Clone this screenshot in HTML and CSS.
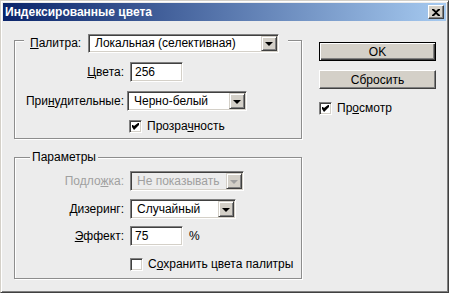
FILE: index.html
```html
<!DOCTYPE html>
<html lang="ru">
<head>
    <meta charset="utf-8">
    <link rel="stylesheet" href="styles.css">
</head>
<body>

<div class="window">
    <div class="titlebar">
        <span class="title">Индексированные цвета</span>
        <span class="close-btn">
            <svg width="8" height="7" viewBox="0 0 8 7"><path d="M0 0h2l2 2 2-2h2v1L5 3.5 8 6v1H6L4 5 2 7H0V6l3-2.5L0 1z" fill="#000"/></svg>
        </span>
    </div>

    <div class="client">
        <div class="left">
            <!-- Palette group -->
            <div class="group group-palette">
                <div class="legend">
                    <span class="legend-label"><u>П</u>алитра:</span>
                    <div class="select select-palette">
                        <span class="value">Локальная (селективная)</span>
                        <span class="arrow"><i></i></span>
                    </div>
                </div>
                <div class="row row-colors">
                    <span class="label"><u>Ц</u>вета:</span>
                    <div class="field input-colors">256</div>
                </div>
                <div class="row row-forced">
                    <span class="label">При<u>н</u>удительные:</span>
                    <div class="select select-forced">
                        <span class="value">Черно-белый</span>
                        <span class="arrow"><i></i></span>
                    </div>
                </div>
                <div class="row row-transp">
                    <span class="box checked"><svg width="7" height="7" viewBox="0 0 7 7"><path d="M0 2h1l1 1 4-3h1v2L2 7 0 4z" fill="#000"/></svg></span>
                    <span>Прозра<u>ч</u>ность</span>
                </div>
            </div>

            <!-- Options group -->
            <div class="group group-options">
                <div class="legend legend-text">Параметры</div>
                <div class="row row-matte disabled">
                    <span class="label">Подло<u>ж</u>ка:</span>
                    <div class="select select-matte">
                        <span class="value">Не показывать</span>
                        <span class="arrow"><i></i></span>
                    </div>
                </div>
                <div class="row row-dither">
                    <span class="label"><u>Д</u>изеринг:</span>
                    <div class="select select-dither">
                        <span class="value">Случайный</span>
                        <span class="arrow"><i></i></span>
                    </div>
                </div>
                <div class="row row-amount">
                    <span class="label"><u>Э</u>ффект:</span>
                    <div class="field input-amount">75</div>
                    <span class="unit">%</span>
                </div>
                <div class="row row-keep">
                    <span class="box"></span>
                    <span>С<u>о</u>хранить цвета палитры</span>
                </div>
            </div>
        </div>

        <div class="right">
            <div class="btn btn-default"><span>OK</span></div>
            <div class="btn"><span>Сбросить</span></div>
            <div class="row row-preview">
                <span class="box checked"><svg width="7" height="7" viewBox="0 0 7 7"><path d="M0 2h1l1 1 4-3h1v2L2 7 0 4z" fill="#000"/></svg></span>
                <span>Пр<u>о</u>смотр</span>
            </div>
        </div>
    </div>
</div>

</body>
</html>
```

FILE: styles.css
```css
body {
    margin: 0;
    font-family: 'Liberation Sans', Arial, sans-serif;
    font-size: 12px;
    color: #000;
    background: #ececec;
}

u {
    text-decoration: underline;
    text-underline-offset: 1px;
}

/* Window frame */
.window {
    width: 449px;
    height: 293px;
    box-sizing: border-box;
    background: #ececec;
    border: 1px solid;
    border-color: #d4d0c8 #404040 #404040 #d4d0c8;
    box-shadow: inset 1px 1px 0 #fff, inset -1px -1px 0 #808080;
    padding: 2px;
}

.titlebar {
    height: 18px;
    display: flex;
    align-items: center;
    justify-content: space-between;
    background: linear-gradient(to right, #0a246a, #a6caf0);
    padding: 0 2px 0 2px;
}

.title {
    color: #fff;
    font-weight: bold;
    font-size: 12px;
}

.close-btn {
    width: 16px;
    height: 14px;
    box-sizing: border-box;
    display: flex;
    align-items: center;
    justify-content: center;
    background: #d4d0c8;
    border: 1px solid;
    border-color: #fff #404040 #404040 #fff;
    box-shadow: inset -1px -1px 0 #808080;
}

/* Client area */
.client {
    display: flex;
    padding: 19px 0 0 11px;
}

.left {
    width: 288px;
}

.right {
    margin-left: 17px;
    padding-top: 2px;
    width: 117px;
}

/* Group boxes */
.group {
    box-sizing: border-box;
    border: 1px solid #8d8d8d;
    box-shadow: inset 1px 1px 0 #fff, 1px 1px 0 #fff;
}

.group-palette {
    height: 99px;
}

.group-options {
    height: 122px;
    margin-top: 18px;
}

.legend {
    display: flex;
    align-items: center;
    background: #ececec;
    width: max-content;
    height: 18px;
    margin: -7px 0 0 9px;
    padding: 0 9px 0 6px;
}

.legend-label {
    width: 58px;
}

.legend-text {
    height: 14px;
    margin: -8px 0 0 15px;
    padding: 0 2px;
}

.row {
    display: flex;
    align-items: center;
}

.label {
    width: 109px;
    text-align: right;
    white-space: nowrap;
}

.row-colors { margin-top: 10px; }
.row-colors .field { margin-left: 6px; }
.row-forced { margin-top: 9px; }
.row-forced .select { margin-left: 3px; }
.row-transp { margin: 8px 0 0 114px; }

.row-matte { margin-top: 7px; }
.row-dither { margin-top: 8px; }
.row-amount { margin-top: 7px; }
.row-keep { margin: 11px 0 0 115px; }
.row-matte .select,
.row-dither .select,
.row-amount .field { margin-left: 6px; }

.unit {
    margin-left: 6px;
}

/* Sunken edit fields */
.field {
    box-sizing: border-box;
    height: 20px;
    background: #fff;
    border: 1px solid;
    border-color: #808080 #fff #fff #808080;
    box-shadow: inset 1px 1px 0 #404040, inset -1px -1px 0 #d4d0c8;
    padding: 2px 0 0 4px;
    line-height: 14px;
}

.input-colors,
.input-amount {
    width: 53px;
}

/* Combo boxes */
.select {
    box-sizing: border-box;
    height: 20px;
    display: flex;
    align-items: center;
    justify-content: space-between;
    background: #fff;
    border: 1px solid;
    border-color: #808080 #fff #fff #808080;
    box-shadow: inset 1px 1px 0 #404040, inset -1px -1px 0 #d4d0c8;
    padding: 1px 1px 1px 6px;
}

.select-palette { width: 191px; height: 19px; }
.select-forced { width: 120px; }
.select-matte { width: 114px; }
.select-dither { width: 106px; }

.arrow {
    width: 16px;
    height: 100%;
    box-sizing: border-box;
    display: flex;
    align-items: center;
    justify-content: center;
    background: #d4d0c8;
    border: 1px solid;
    border-color: #d4d0c8 #404040 #404040 #d4d0c8;
    box-shadow: inset 1px 1px 0 #fff, inset -1px -1px 0 #808080;
}

.arrow i {
    width: 0;
    height: 0;
    border-left: 4px solid transparent;
    border-right: 4px solid transparent;
    border-top: 4px solid #000;
    margin-top: 1px;
}

.disabled {
    color: #a0a0a0;
}

.disabled .select {
    background: #ececec;
}

.disabled .arrow i {
    border-top-color: #a0a0a0;
}

/* Checkboxes */
.box {
    width: 13px;
    height: 13px;
    box-sizing: border-box;
    display: flex;
    align-items: center;
    justify-content: center;
    background: #fff;
    border: 1px solid;
    border-color: #808080 #fff #fff #808080;
    box-shadow: inset 1px 1px 0 #404040, inset -1px -1px 0 #d4d0c8;
    margin-right: 5px;
}

/* Buttons */
.btn {
    box-sizing: border-box;
    height: 19px;
    display: flex;
    align-items: center;
    justify-content: center;
    background: #d4d0c8;
    border: 1px solid;
    border-color: #fff #404040 #404040 #fff;
    box-shadow: inset -1px -1px 0 #808080;
    margin-bottom: 9px;
}

.btn-default {
    border: 1px solid #000;
    box-shadow: inset 1px 1px 0 #fff, inset -1px -1px 0 #404040, inset -2px -2px 0 #808080;
}

.row-preview {
    margin-top: 12px;
}
```
